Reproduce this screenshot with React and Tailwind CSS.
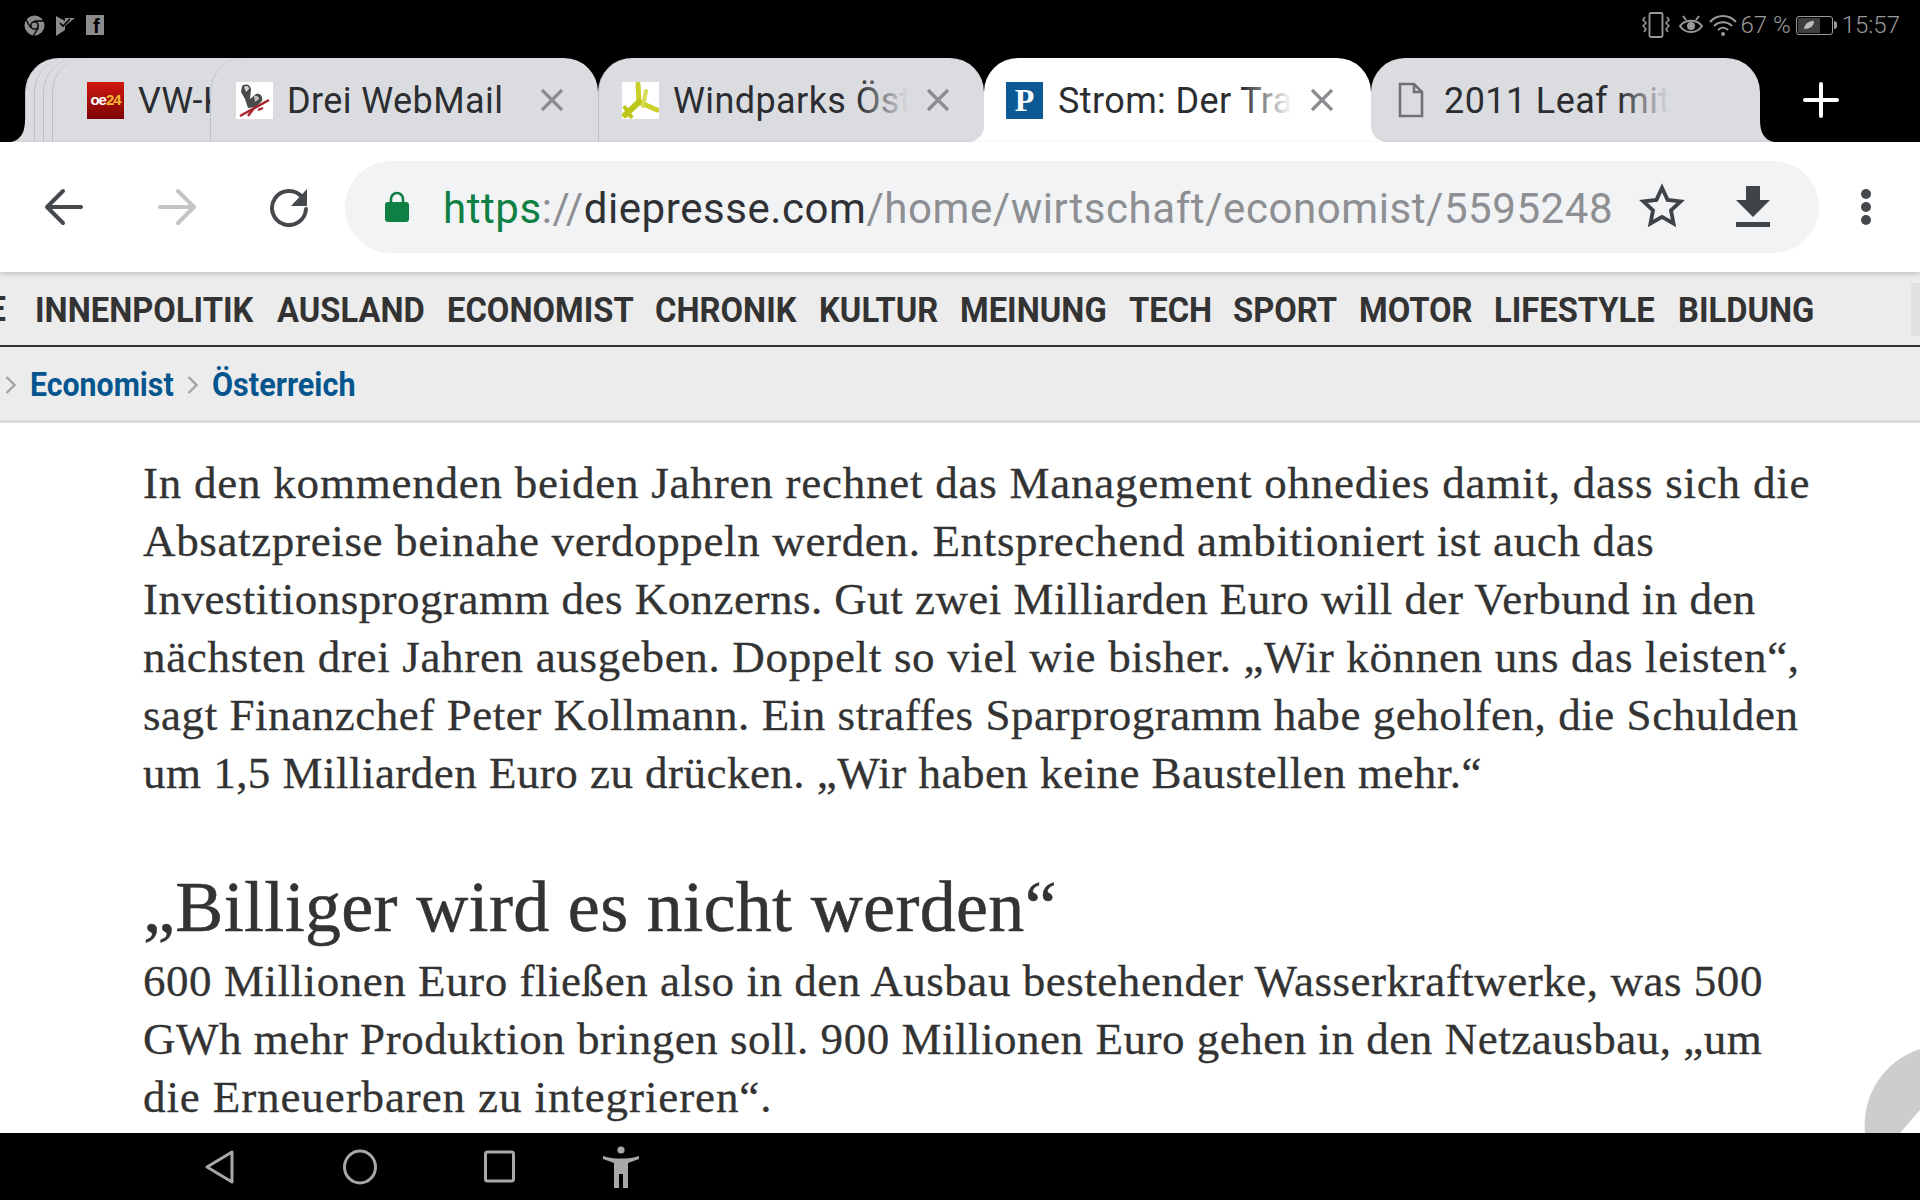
import React from "react";

const C = "#dadce0";

function X() {
  return (
    <svg width="26" height="26" viewBox="0 0 26 26" className="shrink-0">
      <path d="M3 3L23 23M23 3L3 23" stroke="#8a8c90" strokeWidth="3.2" fill="none" />
    </svg>
  );
}

function Oe24() {
  return (
    <span className="flex h-[37px] w-[37px] shrink-0 items-center justify-center bg-linear-to-b from-[#d01810] to-[#7d0606] font-['Liberation_Sans',sans-serif] text-[15px] font-bold tracking-[-1px] text-white">
      oe<span className="text-[#f7b733]">24</span>
    </span>
  );
}

function Drei() {
  return (
    <svg width="37" height="37" viewBox="0 0 37 37" className="shrink-0">
      <rect width="37" height="37" fill="#fff" />
      <path d="M6 4c4-3 9-1 9 4l-1 9 6-5c5-1 7 3 6 7l-6 6-8 1-3-9-4-7z" fill="#4a4a4a" />
      <path d="M8 5c2-2 5-1 5 2l-3 3z" fill="#d8d8d8" />
      <path d="M18 14c3-1 5 1 5 3l-4 3z" fill="#bdbdbd" />
      <path d="M4 34L33 18M12 34l6-8M22 28l5-2" stroke="#a8242c" strokeWidth="2.4" fill="none" />
    </svg>
  );
}

function Wind() {
  return (
    <svg width="37" height="37" viewBox="0 0 37 37" className="shrink-0">
      <rect width="37" height="37" fill="#fff" />
      <path d="M16 2L17 20" stroke="#c9d129" strokeWidth="5" strokeLinecap="round" />
      <path d="M17 20L35 28" stroke="#c9d129" strokeWidth="5" strokeLinecap="round" />
      <path d="M17 20L3 33" stroke="#bcc518" strokeWidth="6" strokeLinecap="round" />
      <path d="M24 9L21 24" stroke="#d5db52" strokeWidth="4" strokeLinecap="round" />
      <path d="M2 24L10 36" stroke="#bcc518" strokeWidth="4" />
    </svg>
  );
}

function Press() {
  return (
    <span className="flex h-[37px] w-[37px] shrink-0 items-center justify-center bg-[#0b5a93] font-['Liberation_Serif',serif] text-[32px] leading-none font-bold text-white">
      P
    </span>
  );
}

function Doc() {
  return (
    <svg width="26" height="36" viewBox="0 0 26 36" className="shrink-0">
      <path d="M2 2h14l8 8v24H2z M16 2v8h8" stroke="#6f7175" strokeWidth="2.6" fill="none" />
    </svg>
  );
}

function Tab({ icon, title, close, className, titleW, fade, closeR, iconGap = "ml-[15px]", children }) {
  return (
    <div className={"relative flex h-full shrink-0 items-center rounded-t-[34px] " + className}>
      {children}
      {icon}
      <div className={"relative overflow-hidden pt-[2px] text-[36px] tracking-[0.4px] whitespace-nowrap text-[#2b2d31] " + iconGap + " " + titleW}>
        {title}
        {fade && <span className={"absolute inset-y-0 right-0 w-[50px] bg-linear-to-r from-transparent " + fade} />}
      </div>
      {close && <span className={"absolute top-[29px] " + closeR}><X /></span>}
    </div>
  );
}

function TabStrip() {
  return (
    <div className="relative flex h-[84px] items-stretch overflow-hidden bg-black pl-[25px]">
      <svg width="16" height="22" viewBox="0 0 16 22" className="absolute bottom-0 left-[11px] z-10">
        <path d="M0 22C10 20 14 12 14 0h2v22z" fill={C} />
      </svg>
      <div className="relative z-[1] -mr-[51px] h-full w-[60px] shrink-0 rounded-tl-[34px] border-l border-[#bfc1c5] bg-[#dadce0]" />
      <div className="relative z-[2] -mr-[51px] h-full w-[60px] shrink-0 rounded-tl-[34px] border-l border-[#bfc1c5] bg-[#dadce0]" />
      <div className="relative z-[3] -mr-[51px] h-full w-[60px] shrink-0 rounded-tl-[34px] border-l border-[#bfc1c5] bg-[#dadce0]" />
      <div className="relative z-[4] -mr-[40px] flex h-full w-[198px] shrink-0 items-center rounded-tl-[34px] border-l border-[#bfc1c5] bg-[#dadce0] pl-[34px]">
        <Oe24 />
        <span className="ml-[14px] w-[72px] overflow-hidden pt-[2px] text-[36px] tracking-[0.4px] whitespace-nowrap text-[#2b2d31]">VW-Käufer</span>
      </div>
      <Tab className="z-[5] w-[388px] border-l border-[#bfc1c5] bg-[#dadce0] pl-[25px]" icon={<Drei />} title="Drei WebMail" close closeR="right-[33px]" titleW="w-[230px]" iconGap="ml-[14px]" />
      <Tab className="z-[6] w-[386px] rounded-br-[16px] border-l border-[#bfc1c5] bg-[#dadce0] pl-[23px]" icon={<Wind />} title="Windparks Österreich" close closeR="right-[33px]" titleW="w-[235px]" iconGap="ml-[14px]" fade="to-[#dadce0]" />
      <Tab className="z-[5] w-[387px] bg-white pl-[22px]" icon={<Press />} title="Strom: Der Transport" close closeR="right-[36px]" titleW="w-[234px]" fade="to-white">
        <span className="absolute bottom-0 -left-[16px] h-[16px] w-[16px] bg-white" />
        <span className="absolute -right-[16px] bottom-0 h-[16px] w-[16px] bg-white" />
      </Tab>
      <Tab className="z-[6] w-[389px] rounded-bl-[16px] bg-[#dadce0] pl-[27px]" icon={<Doc />} title="2011 Leaf mit Batterie" titleW="w-[225px]" iconGap="ml-[20px]" fade="to-[#dadce0]" />
      <svg width="16" height="22" viewBox="0 0 16 22" className="absolute bottom-0 left-[1758px] z-10">
        <path d="M0 22V0h2C2 12 6 20 16 22z" fill={C} />
      </svg>
      <svg width="36" height="36" viewBox="0 0 36 36" className="absolute top-[24px] left-[1803px] z-10">
        <path d="M18 2v32M2 18h32" stroke="#fff" strokeWidth="4" strokeLinecap="round" />
      </svg>
    </div>
  );
}

function StatusBar() {
  return (
    <div className="flex h-[58px] items-center bg-black pr-[20px] pb-[8px] pl-[24px]">
      <svg width="21" height="21" viewBox="0 0 21 21" className="mr-[11px]">
        <circle cx="10.5" cy="10.5" r="10" fill="#8c8c8c" />
        <circle cx="10.5" cy="10.5" r="4.4" fill="#000" />
        <circle cx="10.5" cy="10.5" r="2.9" fill="#8c8c8c" />
        <path d="M10.5 6H20M6.6 12.7L2 4.5M14.4 12.7L9.5 20.5" stroke="#000" strokeWidth="1.3" />
      </svg>
      <svg width="19" height="21" viewBox="0 0 19 21" className="mr-[11px]">
        <path d="M0 1l9 5 0-3 10 0-10 8 0 4-9 6z" fill="#8c8c8c" />
        <path d="M4 8l3 3 7-7" stroke="#000" strokeWidth="1.6" fill="none" />
      </svg>
      <span className="relative flex h-[20px] w-[18px] items-center justify-center overflow-hidden bg-[#8c8c8c]">
        <span className="absolute top-[1px] left-[7px] font-['Liberation_Sans',sans-serif] text-[20px] leading-none font-bold text-black">f</span>
      </span>
      <div className="ml-auto flex items-center font-['Roboto',sans-serif] text-[24px] font-light text-[#9a9a9a]">
        <svg width="28" height="26" viewBox="0 0 28 26" className="mr-[9px]">
          <rect x="7.5" y="1" width="13" height="24" rx="1.5" fill="none" stroke="#9a9a9a" strokeWidth="1.8" />
          <path d="M3 5l-2 3 3 3-3 3 3 3-2 3M25 5l2 3-3 3 3 3-3 3 2 3" fill="none" stroke="#9a9a9a" strokeWidth="1.5" />
        </svg>
        <svg width="24" height="24" viewBox="0 0 24 24" className="mr-[6px]">
          <path d="M1 13c5-7 17-7 22 0-5 8-17 8-22 0z" fill="none" stroke="#9a9a9a" strokeWidth="2" />
          <circle cx="12" cy="13" r="4" fill="#9a9a9a" />
          <path d="M4 3l3 4M20 3l-3 4" stroke="#9a9a9a" strokeWidth="2" />
        </svg>
        <svg width="28" height="24" viewBox="0 0 28 24" className="mr-[3px]">
          <path d="M1 9c7-8 19-8 26 0M5 13c5-5 13-5 18 0M9 17c3-3 7-3 10 0" fill="none" stroke="#9a9a9a" strokeWidth="2" />
          <circle cx="14" cy="21" r="2" fill="#9a9a9a" />
        </svg>
        <span className="mr-[5px] whitespace-nowrap">67 %</span>
        <span className="relative mr-[9px] flex h-[19px] w-[37px] items-center rounded-[3px] border-[1.5px] border-[#9a9a9a] p-[1px]">
          <span className="flex h-full w-[67%] items-center justify-center bg-[#3f3f3f]">
            <svg width="12" height="10" viewBox="0 0 12 10"><path d="M1 9C2 3 6 1 11 1 11 6 7 9 1 9z" fill="#bdbdbd" /></svg>
          </span>
          <span className="absolute top-[4px] -right-[5px] h-[8px] w-[3px] rounded-r-sm bg-[#9a9a9a]" />
        </span>
        <span>15:57</span>
      </div>
    </div>
  );
}

function Toolbar() {
  return (
    <div className="relative z-10 flex h-[130px] items-center bg-white shadow-[0_2px_5px_rgba(0,0,0,0.18)]">
      <svg width="40" height="40" viewBox="0 0 40 40" className="ml-[44px]">
        <path d="M37 20H4M19 4L3 20l16 16" fill="none" stroke="#45484c" strokeWidth="4" strokeLinecap="round" strokeLinejoin="round" />
      </svg>
      <svg width="40" height="40" viewBox="0 0 40 40" className="ml-[73px]">
        <path d="M3 20h33M21 4l16 16-16 16" fill="none" stroke="#c3c4c6" strokeWidth="4" strokeLinecap="round" strokeLinejoin="round" />
      </svg>
      <svg width="40" height="40" viewBox="0 0 40 40" className="ml-[72px]">
        <path d="M33 10A17 17 0 1 0 37 22" fill="none" stroke="#45484c" strokeWidth="4" strokeLinecap="round" />
        <path d="M38 2v17H22z" fill="#45484c" />
      </svg>
      <div className="ml-[36px] flex h-[92px] w-[1474px] items-center rounded-full bg-[#f1f3f4] pl-[40px]">
        <svg width="24" height="32" viewBox="0 0 24 32">
          <path d="M6 12V8a6 6 0 0 1 12 0v4" fill="none" stroke="#0f8043" strokeWidth="2.6" />
          <rect y="11" width="24" height="20" rx="3" fill="#0f8043" />
        </svg>
        <div className="ml-[34px] w-[1170px] pt-[3px] text-[42px] tracking-[0.57px] whitespace-nowrap text-[#8d8f92]">
          <span className="text-[#0f8043]">https</span>://<span className="text-[#2f3134]">diepresse.com</span>/home/wirtschaft/economist/5595248
        </div>
        <svg width="46" height="46" viewBox="0 0 24 24" className="-mt-[3px] ml-[26px]">
          <path d="M12 2.5l2.9 6.3 6.8.8-5 4.7 1.3 6.8-6-3.4-6 3.4 1.3-6.8-5-4.7 6.8-.8z" fill="none" stroke="#3f4246" strokeWidth="2" strokeLinejoin="miter" />
        </svg>
        <svg width="36" height="42" viewBox="0 0 36 42" className="ml-[50px]">
          <path d="M11 0h14v14h10L18 31 1 14h10zM1 36h34v5H1z" fill="#3f4246" />
        </svg>
      </div>
      <div className="ml-[42px] flex flex-col gap-[3px]">
        <span className="h-[10px] w-[10px] rounded-full bg-[#45484c]" />
        <span className="h-[10px] w-[10px] rounded-full bg-[#45484c]" />
        <span className="h-[10px] w-[10px] rounded-full bg-[#45484c]" />
      </div>
    </div>
  );
}

const navItems = [
  ["INNENPOLITIK", "w-[218px]"],
  ["AUSLAND", "w-[146px]"],
  ["ECONOMIST", "w-[184px]"],
  ["CHRONIK", "w-[140px]"],
  ["KULTUR", "w-[117px]"],
  ["MEINUNG", "w-[145px]"],
  ["TECH", "w-[80px]"],
  ["SPORT", "w-[102px]"],
  ["MOTOR", "w-[111px]"],
  ["LIFESTYLE", "w-[160px]"],
  ["BILDUNG", "w-[135px]"],
];

function Chev({ className }) {
  return (
    <svg width="11" height="20" viewBox="0 0 11 20" className={className}>
      <path d="M1.5 2l8 8-8 8" fill="none" stroke="#a3a3a3" strokeWidth="2.4" />
    </svg>
  );
}

function Nav() {
  return (
    <div className="font-['Roboto',sans-serif] font-bold">
      <div className="relative flex h-[75px] items-center gap-[24px] overflow-hidden border-b-2 border-[#333] bg-[#ececec] pt-[5px] text-[35px] text-[#333]">
        <span className="absolute top-[12px] -left-[18px] w-[24px] text-right">E</span>
        <div className="w-[11px]" />
        {navItems.map(([t, w]) => (
          <span key={t} className={"origin-left scale-x-[0.935] whitespace-nowrap " + w}>{t}</span>
        ))}
        <span className="absolute top-[11px] right-0 h-[53px] w-[9px] bg-[#e1e1e1]" />
      </div>
      <div className="relative flex h-[76px] items-center border-b-[3px] border-[#dcdcdc] bg-[#ececec] pt-[2px] text-[34px] text-[#05568e]">
        <Chev className="ml-[5px]" />
        <span className="ml-[14px] w-[144px] origin-left scale-x-[0.89] whitespace-nowrap">Economist</span>
        <Chev className="ml-[13px]" />
        <span className="ml-[14px] w-[143px] origin-left scale-x-[0.9] whitespace-nowrap">Österreich</span>
      </div>
    </div>
  );
}

const p1 = [
  ["In den kommenden beiden Jahren rechnet das Management ohnedies damit, dass sich die", "tracking-[0.77px]"],
  ["Absatzpreise beinahe verdoppeln werden. Entsprechend ambitioniert ist auch das", "tracking-[0.65px]"],
  ["Investitionsprogramm des Konzerns. Gut zwei Milliarden Euro will der Verbund in den", "tracking-[0.47px]"],
  ["nächsten drei Jahren ausgeben. Doppelt so viel wie bisher. „Wir können uns das leisten“,", "tracking-[0.67px]"],
  ["sagt Finanzchef Peter Kollmann. Ein straffes Sparprogramm habe geholfen, die Schulden", "tracking-[0.55px]"],
  ["um 1,5 Milliarden Euro zu drücken. „Wir haben keine Baustellen mehr.“", "tracking-[0.47px]"],
];
const p2 = [
  ["600 Millionen Euro fließen also in den Ausbau bestehender Wasserkraftwerke, was 500", "tracking-[0.54px]"],
  ["GWh mehr Produktion bringen soll. 900 Millionen Euro gehen in den Netzausbau, „um", "tracking-[0.52px]"],
  ["die Erneuerbaren zu integrieren“.", "tracking-[0.9px]"],
];

function Article() {
  return (
    <div className="h-[710px] overflow-hidden bg-white pt-[31px] pl-[143px] font-['Liberation_Serif',serif] text-[45px] leading-[58px] text-[#333] [-webkit-text-stroke:0.3px_#333]">
      {p1.map(([l, t]) => (
        <div key={l} className={"whitespace-nowrap " + t}>{l}</div>
      ))}
      <h2 className="mt-[67px] mb-[7px] text-[72px] leading-[76px] tracking-[0.33px] whitespace-nowrap [-webkit-text-stroke:0.5px_#333]">„Billiger wird es nicht werden“</h2>
      {p2.map(([l, t]) => (
        <div key={l} className={"whitespace-nowrap " + t}>{l}</div>
      ))}
    </div>
  );
}

function BottomBar() {
  return (
    <div className="relative flex h-[67px] items-center bg-black pl-[205px]">
      <svg width="30" height="36" viewBox="0 0 30 36">
        <path d="M27 3v30L2 18z" fill="none" stroke="#a8a8a8" strokeWidth="3" strokeLinejoin="round" />
      </svg>
      <svg width="34" height="36" viewBox="0 0 34 36" className="ml-[108px]">
        <ellipse cx="17" cy="18" rx="15.5" ry="16" fill="none" stroke="#a8a8a8" strokeWidth="3" />
      </svg>
      <svg width="32" height="34" viewBox="0 0 32 34" className="ml-[107px]">
        <rect x="1.5" y="2" width="28" height="29" rx="2" fill="none" stroke="#a8a8a8" strokeWidth="3" />
      </svg>
      <svg width="38" height="42" viewBox="0 0 38 42" className="ml-[86px]">
        <circle cx="19" cy="4" r="3.6" fill="#a8a8a8" />
        <path d="M1 10c6 2 11 2.5 18 2.5S31 12 37 10v3l-11 4v25h-5V28h-4v14h-5V17L1 13z" fill="#a8a8a8" />
      </svg>
    </div>
  );
}

export default function App() {
  return (
    <div className="relative h-[1200px] w-[1920px] overflow-hidden bg-white font-['Roboto',sans-serif]">
      <StatusBar />
      <TabStrip />
      <Toolbar />
      <Nav />
      <Article />
      <BottomBar />
      <svg width="56" height="86" viewBox="0 0 56 86" className="absolute top-[1047px] right-0">
        <path d="M56 2A80 80 0 0 0 1 86H36L56 63z" fill="#cdcdcd" />
      </svg>
    </div>
  );
}
